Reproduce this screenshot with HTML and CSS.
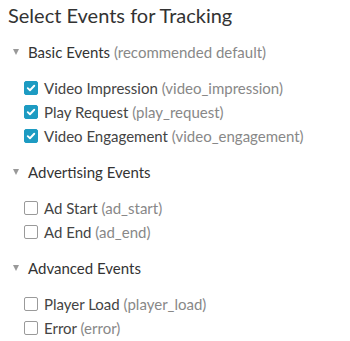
FILE: index.html
```html
<!DOCTYPE html>
<html>
<head>
<meta charset="utf-8">
<link rel="stylesheet" href="styles.css">
</head>
<body>
<div class="panel">
  <h1 class="title">Select Events for Tracking</h1>

  <div class="group">
    <div class="group-head"><span class="caret"></span><span class="text"><span class="name">Basic Events</span> <span class="note">(recommended default)</span></span></div>
    <ul class="items">
      <li class="item"><span class="box checked"><svg viewBox="0 0 14 14" width="14" height="14"><path d="M3.2 7.2 L5.8 9.6 L10.8 4.4" fill="none" stroke="#fff" stroke-width="2.2" stroke-linecap="round" stroke-linejoin="round"/></svg></span><span class="text"><span class="label">Video Impression</span> <span class="note">(video_impression)</span></span></li>
      <li class="item"><span class="box checked"><svg viewBox="0 0 14 14" width="14" height="14"><path d="M3.2 7.2 L5.8 9.6 L10.8 4.4" fill="none" stroke="#fff" stroke-width="2.2" stroke-linecap="round" stroke-linejoin="round"/></svg></span><span class="text"><span class="label">Play Request</span> <span class="note">(play_request)</span></span></li>
      <li class="item"><span class="box checked"><svg viewBox="0 0 14 14" width="14" height="14"><path d="M3.2 7.2 L5.8 9.6 L10.8 4.4" fill="none" stroke="#fff" stroke-width="2.2" stroke-linecap="round" stroke-linejoin="round"/></svg></span><span class="text"><span class="label">Video Engagement</span> <span class="note">(video_engagement)</span></span></li>
    </ul>
  </div>

  <div class="group">
    <div class="group-head"><span class="caret"></span><span class="text"><span class="name">Advertising Events</span></span></div>
    <ul class="items">
      <li class="item"><span class="box"></span><span class="text"><span class="label">Ad Start</span> <span class="note">(ad_start)</span></span></li>
      <li class="item"><span class="box"></span><span class="text"><span class="label">Ad End</span> <span class="note">(ad_end)</span></span></li>
    </ul>
  </div>

  <div class="group">
    <div class="group-head"><span class="caret"></span><span class="text"><span class="name">Advanced Events</span></span></div>
    <ul class="items">
      <li class="item"><span class="box"></span><span class="text"><span class="label">Player Load</span> <span class="note">(player_load)</span></span></li>
      <li class="item"><span class="box"></span><span class="text"><span class="label">Error</span> <span class="note">(error)</span></span></li>
    </ul>
  </div>
</div>
</body>
</html>
```
FILE: styles.css
```css
html, body {
  margin: 0;
  padding: 0;
  background: #fff;
}
body {
  font-family: Lato, "Open Sans", sans-serif;
  color: #333;
}
.panel {
  padding: 2px 8px 0 8px;
}
.title {
  margin: 0;
  font-size: 20px;
  font-weight: 400;
  line-height: 26px;
  color: #333;
}
.group {
  margin-top: 12px;
}
.group-head {
  display: flex;
  align-items: center;
  height: 24px;
  font-size: 15px;
}
.text {
  white-space: pre;
}
.caret {
  width: 0;
  height: 0;
  margin-left: 5px;
  margin-right: 9px;
  border-left: 3.5px solid transparent;
  border-right: 3.5px solid transparent;
  border-top: 6px solid #999;
}
.name {
  color: #333;
}
.note {
  color: #888;
}
.items {
  list-style: none;
  margin: 12px 0 0 0;
  padding: 0 0 0 16px;
}
.item {
  display: flex;
  align-items: center;
  height: 24px;
  font-size: 15px;
  color: #444;
}
.box {
  box-sizing: border-box;
  width: 14px;
  height: 14px;
  border: 1px solid #9a9a9a;
  border-radius: 2px;
  margin-right: 6px;
  display: flex;
  align-items: center;
  justify-content: center;
}
.box.checked {
  background: #1d9bc2;
  border-color: #1d9bc2;
}
.box svg {
  display: block;
}
```
